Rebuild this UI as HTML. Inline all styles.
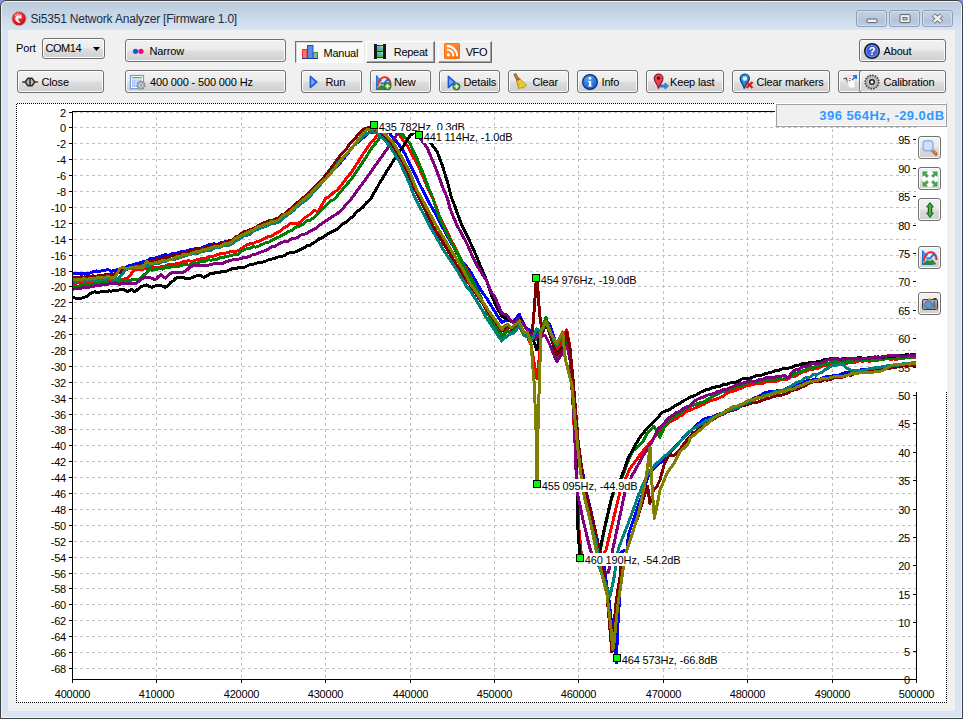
<!DOCTYPE html>
<html><head><meta charset="utf-8"><title>Si5351 Network Analyzer [Firmware 1.0]</title>
<style>
html,body{margin:0;padding:0}
body{width:963px;height:719px;overflow:hidden;position:relative;background:#8c8cec;font-family:"Liberation Sans", "DejaVu Sans", sans-serif;font-size:11px;color:#000}
#win{position:absolute;left:0;top:0;width:963px;height:719px;box-sizing:border-box;border:1px solid #3f3f3f;border-radius:6px 6px 0 0;background:#d7e4f2;box-shadow:inset 0 0 0 1px #edf2f9}
#cap{position:absolute;left:2px;top:2px;width:959px;height:28px;background:linear-gradient(#bbcbdc,#d7e4f2);border-radius:4px 4px 0 0}
#title{position:absolute;left:30.5px;top:12px;font-size:12px;line-height:14px;color:#1e2b3f;white-space:nowrap;letter-spacing:-0.2px}
#client{position:absolute;left:8px;top:30px;width:947px;height:681px;background:#f0f0f0}
.cb{position:absolute;top:10px;width:30px;height:17px;box-sizing:border-box;border:1px solid #8e9fba;border-radius:3px;background:linear-gradient(#c3d2e4,#b7c8dd 50%,#b0c2d9 51%,#bccde1);box-shadow:inset 0 0 0 1px rgba(255,255,255,.35)}
.t{position:absolute;white-space:nowrap;line-height:13px;font-size:11px;letter-spacing:-0.15px}
.btn{position:absolute;box-sizing:border-box;border:1px solid #707070;border-radius:3px;background:linear-gradient(#f2f2f2 0%,#ebebeb 47%,#dddddd 53%,#cfcfcf 100%);box-shadow:inset 0 0 0 1px #fbfbfb}
.sb{position:absolute;box-sizing:border-box}
.sb.up{background:#f0f0f0;border-top:1px solid #fff;border-left:1px solid #fff;border-right:1px solid #696969;border-bottom:1px solid #696969;box-shadow:inset -1px -1px 0 #a0a0a0}
.sb.down{background:#f8f8f8;border-top:1px solid #6f6f6f;border-left:1px solid #6f6f6f;border-right:1px solid #fff;border-bottom:1px solid #fff;box-shadow:inset 1px 1px 0 #d8d8d8}
#rd{position:absolute;left:775px;top:103px;width:172px;height:24px;box-sizing:border-box;background:#f0f0f0;border:1px solid;border-color:#fff #a0a0a0 #a0a0a0 #fff;box-shadow:inset 1px 1px 0 #a0a0a0,inset -1px -1px 0 #fff}
#rd span{position:absolute;right:1.5px;top:4px;font-size:13px;line-height:15px;font-weight:bold;color:#3399ff;white-space:nowrap;letter-spacing:0.45px}
</style></head>
<body>
<div id="win"></div>
<div id="cap"></div>
<svg width="16" height="16" viewBox="0 0 16 16" style="position:absolute;left:11px;top:11px;overflow:visible"><defs><radialGradient id="tg" cx="0.4" cy="0.35" r="0.75"><stop offset="0" stop-color="#f06a6a"/><stop offset="0.55" stop-color="#e01a22"/><stop offset="1" stop-color="#b80c14"/></radialGradient></defs><circle cx="8" cy="7.6" r="7.2" fill="url(#tg)" stroke="#b9b4b8" stroke-width="0.9"/><path d="M4.2 8.5C3.8 5.5 6.2 3.4 8.8 4.4L10.6 3.2L10.2 5.2C11.2 6.4 10.8 7.8 9.4 7.6C8.2 7 6.8 7.6 7.2 9L9.4 11.6L8.2 12.2L5.2 10.2Z" fill="#fbeaea"/><path d="M5.2 5L4.3 3.6M6.6 4.2L6.2 2.7M8 3.9L8.2 2.5" stroke="#fbeaea" stroke-width="0.9"/></svg>
<div id="title">Si5351 Network Analyzer [Firmware 1.0]</div>
<div class="cb" style="left:856px;width:31px"><svg width="29" height="15" style="position:absolute;left:0;top:0"><rect x="10" y="8" width="10" height="3.6" rx="0.8" fill="#f2f2f2" stroke="#5b606c" stroke-width="1"/></svg></div>
<div class="cb" style="left:889px;width:31px"><svg width="29" height="15" style="position:absolute;left:0;top:0"><rect x="10" y="3.6" width="10" height="8" rx="0.8" fill="#f2f2f2" stroke="#5b606c" stroke-width="1"/><rect x="13" y="6.5" width="4" height="2.4" fill="#b7c8dd" stroke="#5b606c" stroke-width="0.9"/></svg></div>
<div class="cb" style="left:922px;width:31px"><svg width="29" height="15" style="position:absolute;left:0;top:0"><path d="M10.5 4L18.5 11M18.5 4L10.5 11" stroke="#5b606c" stroke-width="4.3"/><path d="M10.8 4.2L18.2 10.8M18.2 4.2L10.8 10.8" stroke="#f2f2f2" stroke-width="2.5"/></svg></div>
<div id="client"></div>
<span class="t" style="left:16px;top:42px">Port</span>
<div class="btn" style="left:42px;top:38px;width:63px;height:21px"><span class="t" style="left:2.5px;top:3px;letter-spacing:-0.45px">COM14</span><svg width="7" height="4" viewBox="0 0 7 4" style="position:absolute;left:50px;top:8px"><path d="M0 0H7L3.5 4Z" fill="#000"/></svg></div>
<div class="btn" style="left:17px;top:70px;width:87px;height:23px"><svg width="16" height="16" viewBox="0 0 16 16" style="position:absolute;left:4px;top:3px;overflow:visible"><path d="M0 8H4M12 8H16" stroke="#4a453f" stroke-width="1.6"/><path d="M3.2 8L6 4.2H10L12.8 8L10 11.8H6Z" fill="#bdbab2" stroke="#2d2a25" stroke-width="1.5"/><path d="M8 4.2V11.8" stroke="#2d2a25" stroke-width="1.5"/></svg><span class="t" style="left:23.5px;top:5px">Close</span></div>
<div class="btn" style="left:125px;top:39px;width:161px;height:23px"><svg width="16" height="16" viewBox="0 0 16 16" style="position:absolute;left:4px;top:3px;overflow:visible"><circle cx="5.5" cy="8.3" r="2.6" fill="#0063dc"/><circle cx="11" cy="8.3" r="2.6" fill="#ff0084"/></svg><span class="t" style="left:23.5px;top:5px">Narrow</span></div>
<div class="btn" style="left:125px;top:70px;width:161px;height:23px"><svg width="16" height="16" viewBox="0 0 16 16" style="position:absolute;left:4px;top:4px;overflow:visible"><rect x="0.5" y="0.5" width="13" height="13" fill="#fff" stroke="#6f9fe0" stroke-width="1.2"/><rect x="2" y="2" width="10" height="1.4" fill="#5cb85c"/><rect x="2" y="4.5" width="10" height="7.5" fill="#a9c5ef"/><path d="M3 6H4M5 6H8M9 6H10M3 8H4M5 8H8M3 10H4M5 10H7" stroke="#e8f0fc" stroke-width="1"/><circle cx="11" cy="10.3" r="3.9" fill="#b9b9b9" stroke="#7d7d7d" stroke-width="1.3" stroke-dasharray="1.6 1.1"/><circle cx="11" cy="10.3" r="2.6" fill="#d9d9d9" stroke="#8a8a8a" stroke-width="0.6"/><circle cx="11" cy="10.3" r="1.2" fill="#6fa8f0"/></svg><span class="t" style="left:24px;top:5px">400 000 - 500 000 Hz</span></div>
<div class="sb down" style="left:295px;top:41px;width:68px;height:22px"><svg width="16" height="14" viewBox="0 0 16 14" style="position:absolute;left:6px;top:3px;overflow:visible"><rect x="0.5" y="4.5" width="4.5" height="9" fill="#ff7070" stroke="#f03030"/><rect x="5.5" y="0.5" width="5.5" height="13" fill="#5a8ce8" stroke="#1f50d0"/><rect x="11.5" y="7.5" width="4" height="6" fill="#7fc07f" stroke="#3a8a3a"/><path d="M0 13.5H16" stroke="#203a90" stroke-width="1"/></svg><span class="t" style="left:27.5px;top:5px;letter-spacing:-0.25px">Manual</span></div>
<div class="sb up" style="left:366px;top:41px;width:69px;height:22px"><svg width="12" height="15" viewBox="0 0 12 15" style="position:absolute;left:7px;top:2px;overflow:visible"><rect x="0" y="0" width="12" height="15" fill="#3a3a3a"/><rect x="0" y="0" width="2.8" height="15" fill="#151515"/><rect x="9.2" y="0" width="2.8" height="15" fill="#151515"/><rect x="3" y="0" width="6" height="1" fill="#f0f0f0"/><rect x="3" y="14" width="6" height="1" fill="#f0f0f0"/><rect x="3" y="2" width="6" height="5" fill="#5fb0f5"/><path d="M3 3.5L9 6V7H3Z" fill="#45c540"/><rect x="7.6" y="2" width="1.4" height="1.6" fill="#f5e050"/><rect x="3" y="8" width="6" height="5" fill="#5fb0f5"/><path d="M3 9.5L9 12V13H3Z" fill="#45c540"/><rect x="7.6" y="8" width="1.4" height="1.6" fill="#f5e050"/></svg><span class="t" style="left:26.7px;top:4px;letter-spacing:-0.25px">Repeat</span></div>
<div class="sb up" style="left:438px;top:41px;width:54px;height:22px"><svg width="16" height="16" viewBox="0 0 16 16" style="position:absolute;left:5px;top:1px;overflow:visible"><defs><linearGradient id="rssg" x1="0" y1="0" x2="1" y2="1"><stop offset="0" stop-color="#ff9a45"/><stop offset="1" stop-color="#ff6a10"/></linearGradient></defs><rect x="0" y="0" width="16" height="16" rx="1.5" fill="#ff6f14"/><rect x="1" y="1" width="14" height="14" rx="1" fill="url(#rssg)"/><circle cx="4.3" cy="11.8" r="1.6" fill="#fff"/><path d="M3 6.6A6.5 6.5 0 0 1 9.5 13.2" fill="none" stroke="#fff" stroke-width="1.9"/><path d="M3 3A10.2 10.2 0 0 1 13.2 13.2" fill="none" stroke="#fff" stroke-width="1.9"/></svg><span class="t" style="left:26.7px;top:4px;letter-spacing:-0.4px">VFO</span></div>
<div class="btn" style="left:301px;top:70px;width:61px;height:23px"><svg width="16" height="16" viewBox="0 0 16 16" style="position:absolute;left:4px;top:3px;overflow:visible"><path d="M4.3 2.2V13.6L11 8Z" fill="#4f8af0" stroke="#1a55dc" stroke-width="1.4" stroke-linejoin="round"/><path d="M5.5 5V11L8.6 8Z" fill="#7fadf5"/></svg><span class="t" style="left:23.5px;top:5px">Run</span></div>
<div class="btn" style="left:370px;top:70px;width:61px;height:23px"><svg width="16" height="16" viewBox="0 0 16 16" style="position:absolute;left:5px;top:4px;overflow:visible"><path d="M0.8 0.5V14.2H11" stroke="#1f6fd8" stroke-width="1.6" fill="none"/><path d="M1 0.8L6 5.5L1.5 9Z" fill="#3a8ae8"/><path d="M1.5 13L5 10L8 11L10.5 9.5L14 13.5V14.5H1.5Z" fill="#2f8a2f"/><path d="M1.8 11C3 5 6 1.8 9.5 2.2C12.5 2.8 14.4 6 14.6 10" fill="none" stroke="#f02828" stroke-width="1.9"/><path d="M4.5 8.2L8 8.6L11.5 4.5L14.5 6.5" fill="none" stroke="#1f6fe0" stroke-width="1.9"/><circle cx="11.5" cy="11.2" r="3.6" fill="#3f9a2c" stroke="#1f6a14" stroke-width="0.8"/><path d="M9.3 11.2H13.7M11.5 9.0V13.399999999999999" stroke="#e8f5e0" stroke-width="1.6"/></svg><span class="t" style="left:23px;top:5px">New</span></div>
<div class="btn" style="left:439px;top:70px;width:61px;height:23px"><svg width="16" height="16" viewBox="0 0 16 16" style="position:absolute;left:4px;top:3px;overflow:visible"><path d="M4.3 2.2V13.6L11 8Z" fill="#4f8af0" stroke="#1a55dc" stroke-width="1.4" stroke-linejoin="round"/><path d="M5.5 5V11L8.6 8Z" fill="#7fadf5"/><circle cx="12.5" cy="12.5" r="3.6" fill="#3f9a2c" stroke="#1f6a14" stroke-width="0.8"/><path d="M10.3 12.5H14.7M12.5 10.3V14.7" stroke="#e8f5e0" stroke-width="1.6"/></svg><span class="t" style="left:23.5px;top:5px">Details</span></div>
<div class="btn" style="left:508px;top:70px;width:61px;height:23px"><svg width="16" height="16" viewBox="0 0 16 16" style="position:absolute;left:4px;top:3.299999999999997px;overflow:visible"><path d="M2.2 0.8L5.2 6.2" stroke="#6a4a1a" stroke-width="3" stroke-linecap="round"/><path d="M2.2 0.8L5.2 6.2" stroke="#c08a30" stroke-width="1.6" stroke-linecap="round"/><path d="M3.4 6.6L7.2 4.8" stroke="#e03a2a" stroke-width="1.8"/><path d="M3.6 7L7.4 5.2L13.6 11.2L11.5 12.5L10.5 14L7.5 13.8L5.6 14.6Z" fill="#f2d230" stroke="#a8861a" stroke-width="0.9" stroke-linejoin="round"/><path d="M5.5 8L7 13.5M7 7.2L10.5 13" stroke="#c9a61e" stroke-width="0.7"/></svg><span class="t" style="left:23.5px;top:5px">Clear</span></div>
<div class="btn" style="left:577px;top:70px;width:61px;height:23px"><svg width="16" height="16" viewBox="0 0 16 16" style="position:absolute;left:4px;top:3px;overflow:visible"><defs><radialGradient id="infg" cx="0.4" cy="0.3" r="0.8"><stop offset="0" stop-color="#5fa6f0"/><stop offset="1" stop-color="#0a4fc0"/></radialGradient></defs><circle cx="8" cy="8" r="7.4" fill="url(#infg)" stroke="#0a2f86" stroke-width="1.2"/><circle cx="8" cy="4.2" r="1.3" fill="#fff"/><path d="M6.2 7H9.2V11.5H10.2V12.6H6V11.5H7V8.1H6.2Z" fill="#fff"/></svg><span class="t" style="left:23.5px;top:5px">Info</span></div>
<div class="btn" style="left:646px;top:70px;width:78px;height:23px"><svg width="16" height="16" viewBox="0 0 16 16" style="position:absolute;left:6px;top:2px;overflow:visible"><path d="M5.5 15.8C5.3 11.5 1.2 9.5 1.2 5.4A4.4 4.4 0 0 1 10 5.4C10 9.5 6 11.5 5.5 15.8Z" fill="#e8444e" stroke="#8a1018" stroke-width="1.1"/><circle cx="5.6" cy="5.2" r="1.6" fill="#4a1010"/><path d="M7 12H12V10L15.5 13L12 16V14H7Z" fill="#3a8cf0" stroke="#1556b8" stroke-width="0.7"/></svg><span class="t" style="left:23px;top:5px">Keep last</span></div>
<div class="btn" style="left:732px;top:70px;width:98px;height:23px"><svg width="16" height="16" viewBox="0 0 16 16" style="position:absolute;left:6px;top:2px;overflow:visible"><path d="M5 15.6C5 12 1.2 9.5 1.2 5.6A4.6 4.6 0 0 1 10.4 5.6C10.4 8.5 8 10.5 6.6 12.6Z" fill="#1a8ee0" stroke="#0a3a70" stroke-width="1.2"/><circle cx="5.8" cy="5.6" r="2.3" fill="#dceeff"/><path d="M7.5 9L13.5 15M13.5 9L7.5 15" stroke="#e01818" stroke-width="2.3"/></svg><span class="t" style="left:23.5px;top:5px">Clear markers</span></div>
<div class="btn" style="left:838px;top:70px;width:30px;height:23px"><svg width="16" height="16" viewBox="0 0 16 16" style="position:absolute;left:4px;top:3px;overflow:visible"><path d="M0.5 5L3 4L5 9" stroke="#555" stroke-width="1.3" fill="none"/><path d="M5 2H12V14H6L4.5 10Z" fill="#fbfbfb" stroke="#cfcfcf" stroke-width="0.8"/><path d="M6 4.5H8M6 6.5H7.5" stroke="#e05050" stroke-width="1"/><path d="M9 6L13 2M10 1.8H13.2V5" stroke="#2a7ae8" stroke-width="1.7" fill="none"/></svg></div>
<div class="btn" style="left:859px;top:70px;width:87px;height:23px"><svg width="16" height="16" viewBox="0 0 16 16" style="position:absolute;left:4px;top:3px;overflow:visible"><circle cx="8" cy="8" r="6.7" fill="#b2b2b2" stroke="#3a3a3a" stroke-width="1.7" stroke-dasharray="1.5 1.13"/><circle cx="8" cy="8" r="5.6" fill="#b6b6b6"/><circle cx="8" cy="8" r="4.4" fill="#c6c6c6"/><circle cx="8" cy="8" r="2.3" fill="#fdfdfd" stroke="#222" stroke-width="1.5"/></svg><span class="t" style="left:23.5px;top:5px">Calibration</span></div>
<div class="btn" style="left:859px;top:39px;width:87px;height:23px"><svg width="16" height="16" viewBox="0 0 16 16" style="position:absolute;left:4px;top:3px;overflow:visible"><circle cx="8" cy="8" r="7.3" fill="#3f62d8" stroke="#15181f" stroke-width="1.4"/><circle cx="8" cy="8" r="5.9" fill="none" stroke="#7d9bf0" stroke-width="0.8"/><text x="8" y="12" text-anchor="middle" font-family='"Liberation Sans",sans-serif' font-weight="bold" font-size="11px" fill="#fff">?</text></svg><span class="t" style="left:23.5px;top:5px">About</span></div>
<svg id="chart" width="963" height="719" viewBox="0 0 963 719" style="position:absolute;left:0;top:0" font-family='"Liberation Sans", "DejaVu Sans", sans-serif' font-size="11px">
<defs><pattern id="dots" width="2" height="2" patternUnits="userSpaceOnUse"><rect x="0" y="0" width="1" height="1" fill="#000"/><rect x="1" y="1" width="1" height="1" fill="#000"/></pattern><clipPath id="plotclip"><rect x="72" y="111" width="845" height="569"/></clipPath></defs>
<rect x="16" y="103" width="931" height="600" fill="#fff"/>
<g fill="url(#dots)"><rect x="16" y="103" width="931" height="1"/><rect x="16" y="702" width="931" height="1"/><rect x="16" y="103" width="1" height="600"/><rect x="946" y="103" width="1" height="600"/></g>
<g stroke="#c0c0c0" stroke-width="1" stroke-dasharray="3 3" shape-rendering="crispEdges">
<line x1="74" y1="112.5" x2="916" y2="112.5"/>
<line x1="74" y1="127.5" x2="916" y2="127.5"/>
<line x1="74" y1="143.5" x2="916" y2="143.5"/>
<line x1="74" y1="159.5" x2="916" y2="159.5"/>
<line x1="74" y1="175.5" x2="916" y2="175.5"/>
<line x1="74" y1="191.5" x2="916" y2="191.5"/>
<line x1="74" y1="207.5" x2="916" y2="207.5"/>
<line x1="74" y1="223.5" x2="916" y2="223.5"/>
<line x1="74" y1="239.5" x2="916" y2="239.5"/>
<line x1="74" y1="255.5" x2="916" y2="255.5"/>
<line x1="74" y1="271.5" x2="916" y2="271.5"/>
<line x1="74" y1="286.5" x2="916" y2="286.5"/>
<line x1="74" y1="302.5" x2="916" y2="302.5"/>
<line x1="74" y1="318.5" x2="916" y2="318.5"/>
<line x1="74" y1="334.5" x2="916" y2="334.5"/>
<line x1="74" y1="350.5" x2="916" y2="350.5"/>
<line x1="74" y1="366.5" x2="916" y2="366.5"/>
<line x1="74" y1="382.5" x2="916" y2="382.5"/>
<line x1="74" y1="398.5" x2="916" y2="398.5"/>
<line x1="74" y1="414.5" x2="916" y2="414.5"/>
<line x1="74" y1="429.5" x2="916" y2="429.5"/>
<line x1="74" y1="445.5" x2="916" y2="445.5"/>
<line x1="74" y1="461.5" x2="916" y2="461.5"/>
<line x1="74" y1="477.5" x2="916" y2="477.5"/>
<line x1="74" y1="493.5" x2="916" y2="493.5"/>
<line x1="74" y1="509.5" x2="916" y2="509.5"/>
<line x1="74" y1="525.5" x2="916" y2="525.5"/>
<line x1="74" y1="541.5" x2="916" y2="541.5"/>
<line x1="74" y1="557.5" x2="916" y2="557.5"/>
<line x1="74" y1="573.5" x2="916" y2="573.5"/>
<line x1="74" y1="588.5" x2="916" y2="588.5"/>
<line x1="74" y1="604.5" x2="916" y2="604.5"/>
<line x1="74" y1="620.5" x2="916" y2="620.5"/>
<line x1="74" y1="636.5" x2="916" y2="636.5"/>
<line x1="74" y1="652.5" x2="916" y2="652.5"/>
<line x1="74" y1="668.5" x2="916" y2="668.5"/>
<line x1="156.5" y1="111" x2="156.5" y2="679"/>
<line x1="241.5" y1="111" x2="241.5" y2="679"/>
<line x1="325.5" y1="111" x2="325.5" y2="679"/>
<line x1="410.5" y1="111" x2="410.5" y2="679"/>
<line x1="494.5" y1="111" x2="494.5" y2="679"/>
<line x1="578.5" y1="111" x2="578.5" y2="679"/>
<line x1="663.5" y1="111" x2="663.5" y2="679"/>
<line x1="747.5" y1="111" x2="747.5" y2="679"/>
<line x1="832.5" y1="111" x2="832.5" y2="679"/>
</g>
<g fill="#000" letter-spacing="-0.2" text-anchor="end">
<text x="910" y="683.5">0</text>
<text x="910" y="655.5">5</text>
<text x="910" y="626.5">10</text>
<text x="910" y="598.5">15</text>
<text x="910" y="569.5">20</text>
<text x="910" y="541.5">25</text>
<text x="910" y="513.5">30</text>
<text x="910" y="484.5">35</text>
<text x="910" y="456.5">40</text>
<text x="910" y="427.5">45</text>
<text x="910" y="399.5">50</text>
<text x="910" y="371.5">55</text>
<text x="910" y="342.5">60</text>
<text x="910" y="314.5">65</text>
<text x="910" y="285.5">70</text>
<text x="910" y="257.5">75</text>
<text x="910" y="229.5">80</text>
<text x="910" y="200.5">85</text>
<text x="910" y="172.5">90</text>
<text x="910" y="143.5">95</text>
</g>
<g fill="none" stroke-width="3" stroke-linejoin="round" stroke-linecap="butt" shape-rendering="crispEdges" clip-path="url(#plotclip)">
<polyline stroke="#0000ff" points="72.0,274.0 75.0,273.4 78.0,273.7 81.0,273.3 84.0,273.5 87.0,273.4 90.0,273.0 93.2,271.7 96.4,271.0 99.6,271.7 102.8,270.2 106.0,270.0 108.7,269.8 111.3,271.3 114.0,270.7 117.0,269.7 120.0,269.3 123.0,267.8 126.0,267.1 129.0,265.4 132.0,265.2 135.0,264.0 138.1,263.6 141.1,262.2 144.2,261.6 147.2,260.5 150.3,258.6 153.3,258.8 156.4,257.4 159.3,256.9 162.3,255.7 165.2,254.6 168.2,255.3 171.2,254.0 174.1,253.7 177.1,253.3 180.0,252.0 183.1,251.7 186.2,251.3 189.4,249.8 192.5,249.7 195.6,248.5 198.8,248.6 201.9,247.8 205.0,246.5 208.1,245.1 211.1,244.5 214.2,243.9 217.2,244.4 220.3,242.8 223.4,242.4 226.4,241.2 229.5,240.8 232.4,239.9 235.2,238.7 238.1,237.7 241.0,237.0 244.0,235.5 247.0,233.8 250.0,232.6 253.0,230.6 256.0,229.4 259.0,227.0 262.2,226.4 265.5,225.5 268.7,223.8 271.9,221.8 275.2,221.7 278.4,220.0 281.5,218.5 284.6,216.2 287.8,213.5 290.9,211.5 294.0,209.0 296.7,206.1 299.4,204.7 302.2,201.9 304.9,199.1 307.6,197.0 310.6,193.1 313.6,191.2 316.6,188.3 319.7,183.7 322.7,181.6 325.7,178.0 328.6,174.9 331.4,171.4 334.3,168.7 337.1,166.4 340.0,163.0 343.1,159.3 346.2,155.0 349.4,151.4 352.5,147.5 355.8,143.8 359.0,141.8 362.3,138.2 365.5,136.1 368.8,132.5 371.5,132.4 374.3,130.8 377.0,130.0 380.3,131.1 383.7,130.4 387.0,131.0 390.1,133.8 393.2,138.0 396.3,141.3 399.2,145.2 402.1,149.5 405.0,153.8 407.5,159.2 410.1,164.7 412.6,170.0 416.3,177.3 420.0,185.0 423.2,191.1 426.4,197.6 429.9,204.0 433.4,210.0 436.7,216.2 440.0,222.7 443.4,228.9 446.7,235.0 450.0,240.8 453.4,246.7 456.7,252.6 460.0,258.4 463.3,262.7 466.7,266.8 470.0,271.0 473.3,276.9 476.7,282.7 480.0,288.5 483.4,293.7 486.7,298.4 490.1,303.9 493.5,309.4 496.2,313.8 499.0,318.3 501.7,322.6 505.0,320.9 508.4,320.0 510.7,320.7 513.0,322.0 516.1,318.3 519.2,314.2 522.1,320.5 525.0,326.8 528.4,329.3 532.0,333.0 536.0,335.0 538.5,332.6 541.0,330.0 543.5,324.8 546.0,320.0 550.0,325.0 552.8,333.9 555.7,342.9 558.5,351.8 560.8,348.2 563.0,345.0 566.0,335.0 570.0,350.0 573.0,385.0 576.0,420.0 579.0,450.0 582.5,472.0 586.7,493.4 589.9,506.8 593.0,520.0 596.1,534.3 599.2,548.5 601.6,557.0 604.0,566.0 606.5,583.1 609.0,600.0 613.0,635.0 616.3,663.0 617.7,627.5 619.6,598.0 620.6,566.0 621.0,552.0 624.0,550.9 627.0,550.0 628.4,535.0 631.7,525.1 635.0,515.0 638.5,504.9 642.0,495.0 645.2,485.1 648.5,475.0 651.0,471.8 653.5,468.4 655.0,467.5 658.1,464.2 661.3,461.8 664.4,460.0 667.0,456.8 669.7,453.7 672.4,450.1 675.0,447.0 678.3,443.2 681.7,439.6 685.0,435.7 687.5,433.6 690.0,432.0 693.5,428.3 697.0,425.0 700.6,421.6 704.3,418.8 707.5,417.8 710.8,417.4 714.0,416.4 717.2,414.7 720.4,413.4 723.6,412.7 726.8,410.1 730.0,409.5 732.9,408.4 735.8,407.4 738.6,405.4 741.5,404.1 744.4,403.7 747.3,402.0 750.5,400.0 753.7,398.3 756.8,397.1 760.0,396.0 763.2,393.4 766.4,392.5 769.6,391.6 772.8,391.1 776.0,391.3 779.1,390.1 782.3,390.2 785.5,389.0 788.5,387.4 791.5,386.6 794.5,386.1 797.5,385.4 800.4,383.7 803.4,382.3 806.4,381.0 809.4,380.6 812.4,380.0 815.4,378.9 818.4,379.3 821.3,378.7 824.3,377.1 827.3,376.6 830.3,376.9 833.3,375.8 836.3,375.4 839.3,375.0 842.3,373.6 845.2,372.6 848.2,372.2 851.2,372.4 854.2,370.9 857.2,370.6 860.2,370.0 863.2,369.7 866.1,369.3 869.1,368.9 872.1,369.3 875.0,367.7 878.0,367.1 881.0,367.5 884.2,367.8 887.3,367.3 890.5,367.0 893.7,365.7 896.8,366.1 900.0,365.0 903.2,365.2 906.4,363.6 909.6,364.0 912.8,363.7 916.0,362.7"/>
<polyline stroke="#ff0000" points="72.0,284.0 75.0,283.4 78.0,282.9 81.0,283.2 84.0,282.6 87.0,282.2 90.0,282.7 93.0,282.3 96.0,282.9 99.0,282.5 102.0,282.3 105.0,281.2 108.0,281.5 111.0,280.9 114.0,281.0 116.7,280.1 119.3,279.7 122.0,280.0 125.0,278.5 128.0,278.0 131.0,274.1 134.0,269.8 137.2,270.0 140.4,269.6 143.6,269.2 146.8,267.9 150.0,267.7 153.2,267.9 156.4,267.3 159.3,267.1 162.3,266.8 165.2,266.3 168.2,264.5 171.2,264.8 174.1,264.3 177.1,263.5 180.0,263.0 182.9,261.9 185.7,261.8 188.6,260.6 191.4,261.4 194.3,260.7 197.1,259.6 200.0,259.0 202.9,258.0 205.7,258.2 208.6,256.9 211.4,256.7 214.3,255.9 217.1,254.6 220.0,253.9 222.9,253.3 225.8,253.1 228.8,252.3 231.7,251.4 234.6,251.2 237.5,251.0 240.4,249.5 243.4,247.0 246.5,245.1 249.6,244.0 252.8,243.7 255.9,242.0 259.0,241.2 262.2,239.8 265.5,238.2 268.7,236.5 271.9,236.1 275.2,233.4 278.4,232.4 281.3,230.1 284.2,227.6 287.1,226.1 290.0,223.7 292.6,223.3 295.3,223.5 297.9,223.7 301.0,221.6 304.1,218.3 307.2,216.2 310.3,214.2 313.4,211.0 315.7,210.9 318.0,212.0 320.6,207.3 323.1,202.8 325.7,198.4 328.5,196.9 331.2,194.7 334.0,192.1 336.8,190.6 341.0,185.6 343.8,181.9 346.6,178.2 349.4,174.8 352.2,171.2 355.0,166.5 357.8,162.4 360.6,158.0 363.4,153.4 366.0,149.9 368.6,146.0 371.2,142.2 373.8,140.4 376.4,136.3 379.0,134.5 381.5,132.5 384.0,131.2 387.0,131.7 390.0,131.2 393.0,130.5 396.5,133.0 400.0,135.7 402.5,139.4 405.1,142.8 407.6,146.3 411.3,153.3 415.0,160.0 417.5,164.9 420.0,170.0 422.5,175.7 425.1,181.7 427.6,187.6 430.1,192.4 432.6,197.6 435.8,206.2 439.0,215.0 442.0,221.5 445.0,227.4 448.0,233.5 451.0,240.0 454.2,246.0 457.5,252.3 460.8,258.9 464.0,265.0 466.8,269.9 469.7,274.9 472.5,280.0 476.2,287.3 480.0,295.0 483.4,303.2 486.7,311.0 489.7,316.0 492.7,320.9 495.7,325.8 498.7,330.8 501.7,336.0 504.6,332.5 507.6,330.0 511.7,333.0 514.2,330.9 516.7,327.8 519.2,326.0 523.4,335.0 527.6,337.0 531.0,345.0 534.5,365.0 536.8,378.5 539.0,360.0 540.5,340.0 543.2,330.8 546.0,322.0 550.0,332.0 553.4,342.0 556.8,352.0 559.4,345.9 562.0,340.0 564.4,335.2 566.8,330.0 570.0,348.0 572.0,385.0 574.0,425.0 576.0,460.0 577.5,490.0 579.0,530.0 582.0,561.0 585.0,560.2 588.0,560.7 591.0,560.9 594.0,560.2 597.0,560.9 600.0,560.0 603.0,555.0 606.0,550.0 609.0,537.4 612.0,525.0 614.7,513.9 617.3,502.6 620.0,491.8 623.3,484.0 626.7,476.1 630.0,468.4 633.3,464.1 636.7,459.6 640.0,455.0 642.8,451.6 645.6,447.9 648.5,444.6 651.3,441.3 654.1,437.6 657.0,434.2 659.8,430.9 662.6,428.0 665.4,426.5 668.2,423.3 671.0,421.1 673.8,419.7 676.8,418.5 679.8,416.0 682.8,414.8 685.8,412.0 688.8,410.3 691.6,409.8 694.4,408.2 697.2,407.2 700.0,405.6 702.8,404.8 705.6,403.2 708.4,401.4 711.2,400.4 714.0,399.7 717.2,398.8 720.4,397.3 723.6,395.8 726.8,393.3 730.0,392.0 732.9,391.2 735.8,390.3 738.6,388.9 741.5,388.1 744.4,386.5 747.3,385.4 750.4,385.1 753.5,384.6 756.6,383.3 759.8,383.8 762.9,383.3 766.0,382.0 769.2,380.9 772.5,381.9 775.8,381.4 779.0,380.5 782.2,379.1 785.5,379.4 788.5,378.9 791.5,376.4 794.5,376.6 797.5,374.9 800.4,372.8 803.4,371.7 806.4,371.3 809.4,369.9 812.4,369.3 815.4,368.8 818.4,368.3 821.3,366.4 824.3,365.4 827.3,366.1 830.3,363.9 833.3,363.9 836.3,364.2 839.2,362.7 842.2,363.5 845.1,363.2 848.1,363.0 851.1,362.2 854.0,362.4 857.0,361.5 860.0,360.8 863.0,361.3 866.0,360.6 869.0,361.3 872.0,360.9 875.0,360.2 878.0,360.1 881.0,359.8 884.2,358.8 887.3,358.6 890.5,359.3 893.7,358.9 896.8,359.3 900.0,358.5 903.2,358.4 906.4,357.4 909.6,357.5 912.8,357.9 916.0,357.2"/>
<polyline stroke="#008000" points="72.0,286.4 75.0,286.3 78.0,286.2 81.0,285.9 84.0,285.8 87.0,285.2 90.0,284.5 93.0,284.9 96.0,283.2 99.0,283.6 102.0,284.1 105.0,283.4 108.0,283.5 111.0,282.0 114.0,282.3 117.2,281.9 120.4,281.2 123.6,281.3 126.8,281.0 130.0,280.5 133.3,279.2 136.7,279.0 140.0,279.0 143.0,275.6 146.0,273.5 149.0,269.8 152.7,270.1 156.4,269.5 159.3,268.5 162.3,269.1 165.2,267.6 168.2,267.9 171.2,266.7 174.1,266.1 177.1,267.0 180.0,266.0 182.9,265.0 185.7,264.4 188.6,265.1 191.4,264.3 194.3,262.8 197.1,263.3 200.0,262.0 202.9,261.4 205.7,261.1 208.6,259.7 211.4,260.2 214.3,259.2 217.1,259.1 220.0,257.7 222.9,257.8 225.8,256.4 228.8,256.0 231.7,255.2 234.6,254.7 237.5,254.8 240.4,251.7 243.4,250.0 246.5,248.9 249.6,248.6 252.8,246.8 255.9,247.1 259.0,246.0 262.2,244.3 265.5,242.8 268.7,242.2 271.9,240.2 275.2,238.5 278.4,237.3 281.6,235.5 284.9,234.1 288.1,231.2 291.4,230.9 294.6,227.6 297.9,226.6 301.0,225.3 304.1,223.7 307.2,220.6 310.3,220.1 313.4,217.9 316.5,214.8 319.5,212.2 322.6,208.3 325.7,206.2 328.5,203.0 331.2,200.8 334.0,199.6 336.8,196.4 341.1,191.2 343.9,187.7 346.6,184.6 349.4,181.4 352.2,177.8 355.0,173.9 357.8,169.4 360.6,165.3 363.4,161.2 366.0,157.1 368.6,153.1 371.2,148.9 373.8,145.4 376.4,142.4 379.0,138.9 383.0,134.8 386.5,133.4 390.0,131.0 393.5,131.6 397.0,131.0 399.8,132.0 402.6,134.4 406.3,139.3 410.0,143.8 412.5,149.0 415.1,154.5 417.6,160.0 420.7,167.6 423.8,175.0 426.9,183.4 430.0,191.3 432.6,197.6 435.5,206.2 438.4,215.0 441.3,221.5 444.2,227.5 447.1,233.7 450.0,240.0 453.4,246.2 456.7,252.3 460.0,258.5 463.4,265.0 466.2,269.8 469.0,275.1 471.8,280.0 474.5,285.2 477.3,289.8 480.0,295.0 483.4,303.3 486.7,312.0 489.7,317.2 492.7,322.0 495.7,327.0 498.7,331.9 501.7,337.0 504.6,334.2 507.6,331.0 511.7,333.0 514.2,330.9 516.7,327.6 519.2,325.0 523.4,334.0 527.6,335.0 531.0,338.0 533.5,338.9 536.0,340.0 538.5,334.8 541.0,330.0 543.5,324.0 546.0,317.6 550.0,330.0 553.4,344.8 556.8,360.0 559.9,352.5 563.0,345.0 566.0,335.0 570.0,355.0 572.0,387.0 574.0,420.0 576.0,450.0 577.0,490.0 578.0,530.0 580.0,558.0 582.8,558.5 585.7,557.4 588.5,558.4 591.3,558.7 594.2,558.2 597.0,558.0 600.3,550.0 604.3,530.0 607.8,515.1 611.3,500.0 614.0,492.0 616.8,486.8 619.5,482.0 622.3,477.0 626.0,466.8 629.6,457.0 633.0,450.7 636.0,448.7 639.0,445.2 642.0,443.0 645.0,437.5 648.0,432.0 651.0,429.8 654.0,426.0 656.9,431.9 659.8,437.5 664.0,428.0 667.0,423.6 670.0,418.8 673.1,416.8 676.3,415.0 679.4,413.5 682.5,411.2 685.7,409.0 688.8,407.5 691.6,406.2 694.4,404.6 697.2,403.8 700.0,402.8 702.8,402.2 705.6,400.8 708.4,398.9 711.2,397.4 714.0,396.0 717.2,394.3 720.4,392.5 723.6,391.4 726.8,390.9 730.0,389.0 732.9,388.6 735.8,386.8 738.6,386.5 741.5,385.4 744.4,384.3 747.3,383.0 750.4,382.8 753.5,382.6 756.6,381.5 759.8,381.7 762.9,380.6 766.0,380.5 769.2,380.1 772.5,380.2 775.8,379.7 779.0,378.6 782.2,379.3 785.5,378.2 788.5,377.2 791.5,375.8 794.5,373.6 797.5,373.2 800.4,371.4 803.4,370.8 806.4,369.2 809.4,368.0 812.4,367.7 815.4,366.6 818.4,366.0 821.3,364.5 824.3,364.2 827.3,363.5 830.3,362.8 833.3,361.5 836.3,361.1 839.2,361.8 842.2,361.7 845.1,361.3 848.1,361.6 851.1,361.5 854.0,360.7 857.0,360.5 860.0,360.4 863.0,359.6 866.0,360.5 869.0,360.4 872.0,359.5 875.0,359.7 878.0,359.5 881.0,359.0 884.2,359.2 887.3,358.1 890.5,358.8 893.7,358.3 896.8,358.3 900.0,357.8 903.2,357.5 906.4,357.6 909.6,357.6 912.8,357.1 916.0,356.7"/>
<polyline stroke="#000000" points="72.0,297.5 75.3,298.1 78.7,298.3 82.0,298.0 84.5,297.2 87.0,296.4 89.5,294.2 92.0,292.8 94.8,291.8 97.5,292.6 100.2,292.0 103.0,291.8 105.8,291.9 108.7,290.9 111.5,291.2 114.3,290.1 117.2,290.6 120.0,289.8 123.0,289.0 127.0,291.4 129.2,290.8 131.5,289.4 135.0,291.8 138.2,289.0 141.4,286.4 143.9,285.8 146.4,285.0 149.2,286.4 152.0,287.3 156.0,285.6 158.5,285.1 161.0,285.6 163.2,286.5 165.5,287.3 168.1,285.5 170.8,282.3 173.4,280.8 176.0,278.0 179.5,277.9 183.0,277.3 186.0,278.5 189.5,278.5 193.0,277.3 195.5,276.2 198.0,275.6 200.8,275.8 203.7,277.3 207.3,275.6 211.0,273.0 213.8,273.3 216.7,272.4 219.5,272.3 222.8,271.3 226.0,271.5 229.5,269.8 232.4,268.7 235.2,268.9 238.1,267.7 241.0,267.5 244.0,267.4 247.0,266.0 250.0,264.6 253.0,264.5 256.0,263.2 259.0,262.6 262.2,262.3 265.5,261.3 268.7,259.7 271.9,259.0 275.2,258.1 278.4,256.8 281.6,256.3 284.9,255.6 288.1,253.1 291.4,252.7 294.6,252.1 297.9,251.0 301.0,249.1 304.1,247.9 307.2,245.5 310.3,245.2 313.4,243.0 316.5,241.1 319.5,238.6 322.6,237.6 325.7,235.4 328.5,233.6 331.2,232.0 334.0,230.9 336.8,229.5 340.1,226.2 343.4,223.7 346.7,222.1 350.0,218.8 353.3,216.0 356.7,211.8 360.0,209.5 363.3,206.8 366.7,202.4 370.0,200.0 373.3,194.0 376.7,188.4 380.0,182.3 383.0,177.5 386.0,172.5 389.0,167.8 391.6,163.7 394.1,159.6 396.7,155.6 399.5,151.5 402.3,147.8 404.9,144.0 407.4,139.5 410.0,135.6 414.0,132.8 416.5,132.3 419.0,135.0 422.0,136.1 425.0,137.5 428.2,141.0 431.4,143.8 434.5,148.2 437.6,152.6 440.1,159.7 442.6,166.3 445.1,174.3 447.6,182.6 451.4,197.6 455.0,206.7 458.4,216.1 461.8,225.0 464.5,230.8 467.3,236.3 470.0,241.8 473.4,249.5 476.8,256.8 480.0,265.0 483.0,272.0 486.0,279.0 488.9,287.7 491.7,296.0 494.2,301.6 496.8,307.0 499.2,311.5 501.7,316.0 505.0,317.6 507.7,319.0 510.3,320.9 513.0,322.0 516.0,319.9 519.0,318.0 521.7,321.5 524.3,325.5 527.0,329.0 529.5,332.4 532.0,336.0 534.4,343.0 536.8,350.0 540.0,335.0 543.0,328.6 546.0,322.0 550.0,335.0 553.5,344.8 557.0,355.0 560.0,350.3 563.0,346.0 567.0,336.0 570.0,350.0 572.0,385.0 574.0,420.0 576.0,450.0 577.0,490.0 578.0,530.0 580.0,558.0 582.8,557.4 585.7,558.1 588.5,557.8 591.3,557.6 594.2,557.9 597.0,558.0 600.0,550.0 604.0,530.0 607.5,515.2 611.0,500.0 613.4,492.0 616.1,486.9 618.8,482.0 621.5,477.0 625.0,467.2 628.6,457.0 631.5,452.1 634.3,446.9 637.1,442.0 640.0,437.0 642.8,433.8 645.6,430.1 648.5,427.4 651.3,424.4 654.1,421.0 657.0,418.8 659.8,415.0 662.6,412.2 665.4,411.1 668.2,410.2 671.0,408.7 673.8,406.6 676.8,404.7 679.8,403.3 682.8,401.2 685.8,399.6 688.8,398.0 691.6,396.6 694.4,395.7 697.2,394.6 700.0,392.5 702.8,391.2 705.6,389.8 708.4,389.6 711.2,388.0 714.0,387.8 717.2,386.1 720.4,386.3 723.6,384.3 726.8,384.3 730.0,383.0 732.9,382.0 735.8,382.1 738.6,381.2 741.5,379.1 744.4,378.5 747.3,378.2 750.4,378.1 753.5,376.8 756.6,375.7 759.8,375.5 762.9,374.8 766.0,373.5 769.2,372.7 772.5,371.9 775.8,370.5 779.0,370.1 782.2,368.9 785.5,368.7 788.5,368.2 791.5,367.4 794.5,365.9 797.5,365.9 800.4,364.3 803.4,363.6 806.4,363.7 809.4,362.7 812.4,362.1 815.4,362.3 818.4,361.4 821.3,361.0 824.3,359.5 827.3,360.2 830.3,358.4 833.3,358.6 836.3,358.7 839.2,359.1 842.2,359.0 845.1,358.9 848.1,358.1 851.1,358.5 854.0,358.5 857.0,358.0 860.0,357.3 863.0,358.5 866.0,358.4 869.0,357.5 872.0,357.9 875.0,357.3 878.0,356.9 881.0,357.2 884.2,357.3 887.3,355.9 890.5,356.8 893.7,356.8 896.8,355.4 900.0,355.5 903.2,356.0 906.4,354.4 909.6,355.4 912.8,354.2 916.0,354.3"/>
<polyline stroke="#800080" points="72.0,289.4 75.0,288.7 78.0,288.0 81.0,288.4 84.0,287.1 87.0,287.5 90.0,287.0 93.0,286.4 96.0,285.5 99.0,285.9 102.0,284.8 105.0,285.0 108.0,284.1 111.0,283.7 114.0,284.0 116.8,283.8 119.6,284.3 122.4,283.0 125.2,283.1 128.0,283.4 130.8,283.5 133.7,283.8 136.5,283.0 140.2,280.3 144.0,277.3 147.0,277.2 150.0,277.5 153.2,279.0 156.4,279.0 158.7,276.2 161.0,274.8 163.2,277.0 165.5,278.0 168.2,275.2 171.0,273.0 174.0,272.3 177.0,272.0 180.0,272.2 183.0,272.3 186.3,270.6 189.7,267.4 193.0,265.7 196.3,265.8 199.7,265.9 203.0,265.7 205.8,265.2 208.5,265.2 211.2,264.2 214.0,263.9 216.8,263.8 219.5,264.0 222.8,263.2 226.2,261.7 229.5,260.7 232.4,259.9 235.2,259.8 238.1,259.1 241.0,258.7 244.0,257.4 247.0,257.2 250.0,256.1 253.0,254.4 256.0,254.0 259.0,252.9 262.2,251.5 265.5,250.5 268.7,248.8 271.9,246.6 275.2,246.3 278.4,244.0 281.6,242.3 284.9,241.6 288.1,241.1 291.4,239.0 294.6,238.4 297.9,237.3 301.0,235.0 304.1,234.4 307.2,233.0 310.3,231.2 313.4,229.5 316.5,227.9 319.5,224.9 322.6,223.3 325.7,220.8 328.5,219.3 331.2,217.5 334.0,215.6 336.8,214.0 340.1,211.2 343.4,208.0 346.7,203.8 350.0,200.5 353.4,196.0 356.7,191.2 360.0,186.9 363.4,182.3 366.2,178.5 368.9,174.7 371.7,170.8 374.5,166.7 377.3,162.7 380.1,158.8 382.8,155.1 385.6,151.1 389.0,146.4 392.3,142.2 396.7,134.8 400.0,132.2 403.0,131.0 405.7,130.1 408.3,128.8 411.0,128.5 414.0,129.1 417.0,131.0 421.4,140.0 424.5,144.2 427.6,148.8 431.3,157.7 435.0,166.3 437.5,173.0 440.1,180.0 442.6,187.0 445.1,192.9 447.6,199.0 450.0,208.4 453.4,216.9 456.8,225.0 460.1,230.9 463.5,237.2 466.8,243.4 469.5,249.6 472.3,255.9 475.0,261.8 476.7,265.0 480.1,270.5 483.4,275.8 486.8,281.0 489.2,287.1 491.7,293.4 495.0,297.0 498.4,305.2 501.7,313.4 504.2,314.0 506.7,315.0 510.0,319.4 513.4,322.6 515.9,321.2 518.4,318.4 521.2,321.9 524.0,325.5 526.8,329.3 529.3,331.7 531.8,335.0 536.0,338.0 538.5,336.1 541.0,335.0 545.0,335.0 547.5,340.0 550.0,345.0 553.4,353.4 556.8,361.8 560.1,356.7 563.5,351.8 567.0,345.0 570.0,360.0 572.0,390.0 574.0,420.0 575.5,455.0 576.7,490.0 579.9,504.8 583.0,520.0 586.5,534.2 590.0,548.5 594.0,560.0 596.7,563.3 599.3,566.7 602.0,570.0 605.0,572.2 608.0,573.0 610.0,566.0 612.6,550.0 615.3,537.6 618.0,525.0 621.5,508.4 625.0,491.8 628.4,484.0 631.8,476.0 634.5,471.3 637.3,466.3 640.0,461.7 643.8,454.4 647.5,448.9 651.3,443.0 655.0,435.6 658.8,428.0 661.6,425.8 664.4,423.0 667.2,419.6 670.0,417.0 672.8,415.2 675.6,413.0 678.5,412.2 681.3,410.3 684.2,408.1 687.1,406.5 690.0,405.7 693.1,402.4 696.3,400.0 699.2,398.4 702.2,397.6 705.1,396.1 708.1,395.0 711.0,394.2 714.0,393.7 717.2,391.8 720.4,391.0 723.6,389.2 726.8,389.3 730.0,387.5 732.9,386.7 735.8,385.0 738.6,384.3 741.5,383.5 744.4,382.5 747.3,381.8 750.4,380.7 753.5,381.3 756.5,381.0 759.6,379.6 762.7,379.1 765.8,377.9 768.8,377.4 771.9,377.3 775.0,377.0 777.6,376.3 780.2,376.9 782.9,375.6 785.5,375.8 788.0,378.0 791.5,373.2 795.0,370.0 797.9,369.7 800.8,368.0 803.6,366.4 806.5,366.1 809.4,365.0 812.4,363.5 815.4,363.5 818.4,363.5 821.3,362.6 824.3,361.6 827.3,360.1 830.3,359.5 833.3,359.0 836.3,358.4 839.2,359.3 842.2,358.9 845.1,359.2 848.1,358.4 851.1,358.2 854.0,359.1 857.0,358.5 860.0,359.1 863.0,358.7 866.0,358.4 869.0,358.3 872.0,357.9 875.0,356.9 878.0,357.2 881.0,357.0 884.2,356.6 887.3,355.9 890.5,355.7 893.7,356.0 896.8,355.8 900.0,356.0 903.2,356.1 906.4,356.3 909.6,355.2 912.8,355.7 916.0,354.8"/>
<polyline stroke="#800000" points="72.0,277.8 75.0,277.1 78.0,278.1 81.0,276.6 84.0,277.3 87.0,276.1 90.0,276.5 93.0,275.8 96.0,276.7 99.0,275.1 102.0,275.5 105.0,274.9 108.0,274.6 111.0,274.3 114.0,274.0 117.0,272.5 120.0,272.5 123.0,270.3 126.0,269.6 129.0,268.2 132.0,267.6 135.0,267.0 138.1,265.8 141.1,265.6 144.2,263.8 147.2,262.3 150.3,261.5 153.3,261.7 156.4,259.9 159.3,258.5 162.3,258.6 165.2,257.5 168.2,257.2 171.2,256.0 174.1,255.8 177.1,254.7 180.0,254.0 183.1,253.4 186.2,253.0 189.4,251.7 192.5,250.2 195.6,249.2 198.8,249.8 201.9,248.3 205.0,247.5 208.1,246.2 211.1,246.7 214.2,245.3 217.2,244.8 220.3,244.2 223.4,242.5 226.4,241.8 229.5,241.3 232.4,240.1 235.2,237.1 238.1,236.2 241.0,234.0 244.0,231.9 247.0,231.3 250.0,229.8 253.0,228.7 256.0,227.0 259.0,225.0 262.2,223.8 265.5,222.2 268.7,220.9 271.9,220.4 275.2,219.2 278.4,218.0 281.5,214.9 284.6,213.8 287.8,210.8 290.9,208.7 294.0,206.0 296.7,203.3 299.4,201.0 302.2,198.3 304.9,196.5 307.6,194.5 310.6,190.9 313.6,187.9 316.6,184.6 319.7,182.0 322.7,178.9 325.7,175.0 330.0,169.5 332.8,165.6 335.6,162.0 338.3,158.1 341.1,154.5 343.9,151.5 346.6,148.7 349.4,144.1 352.2,141.3 355.1,138.5 358.1,134.4 361.0,131.5 364.4,128.9 367.8,127.8 372.0,127.0 375.0,129.7 378.0,131.3 381.0,133.8 384.0,135.8 387.0,138.7 390.0,141.3 392.9,146.2 395.9,151.3 398.8,156.3 401.7,161.7 404.7,167.1 407.6,172.6 411.3,181.3 415.0,190.0 417.6,195.0 420.8,201.2 423.9,207.5 427.1,213.8 430.2,220.2 433.4,226.7 436.7,232.1 440.0,237.5 443.4,243.1 446.7,248.4 449.7,253.4 452.7,258.5 455.8,263.7 458.8,268.3 461.8,273.5 464.7,277.4 467.6,281.6 470.6,285.8 473.5,290.0 476.8,294.9 480.1,299.8 483.5,304.5 486.8,309.4 489.8,313.9 492.8,317.8 495.7,322.5 498.7,326.5 501.7,331.0 504.6,329.1 507.6,326.0 511.7,329.0 514.2,325.9 516.7,325.1 519.2,322.0 523.4,332.0 527.6,333.0 530.0,332.8 532.3,331.8 534.2,310.0 534.9,300.0 536.0,283.4 537.5,283.4 538.6,300.0 539.4,312.0 540.8,323.4 543.0,332.0 546.0,322.0 550.0,333.0 553.4,344.2 556.8,355.0 560.1,351.9 563.5,348.5 566.8,331.8 570.0,348.5 573.5,384.4 575.8,412.0 578.0,440.0 582.0,470.0 585.0,490.0 588.4,503.0 591.7,516.7 595.0,530.0 598.0,545.0 601.0,560.0 604.0,577.3 607.0,595.0 610.0,630.0 611.8,651.9 613.8,627.5 615.7,606.0 617.7,590.6 622.0,566.0 624.7,557.4 627.3,548.7 630.0,540.0 632.8,531.7 635.7,523.2 638.5,515.0 641.8,504.0 645.0,493.4 647.6,486.3 650.0,503.4 653.5,490.0 657.0,486.3 660.0,480.0 664.4,463.8 668.5,455.0 671.8,455.1 675.0,455.0 677.5,452.4 680.0,450.0 683.2,445.0 686.3,440.7 689.5,437.4 692.6,433.8 696.3,431.3 700.0,428.0 702.8,426.5 705.6,424.3 708.4,422.3 711.2,420.4 714.0,418.8 717.2,416.8 720.4,415.2 723.6,414.0 726.8,411.9 730.0,411.0 732.9,410.3 735.8,409.2 738.6,407.9 741.5,405.9 744.4,405.4 747.3,404.5 750.4,403.5 753.5,402.0 756.6,402.5 759.8,401.2 762.9,399.9 766.0,399.0 769.2,398.4 772.5,396.8 775.8,395.9 779.0,395.5 782.2,395.0 785.5,393.7 788.5,392.6 791.5,390.2 794.5,389.9 797.5,389.0 800.4,387.4 803.4,386.4 806.4,385.1 809.4,383.0 812.4,382.0 815.4,381.5 818.4,381.3 821.3,381.4 824.3,379.8 827.3,380.1 830.3,379.4 833.3,378.2 836.3,377.6 839.3,377.2 842.3,377.1 845.2,376.3 848.2,374.9 851.2,375.2 854.2,373.5 857.2,373.4 860.2,372.6 863.2,373.0 866.1,372.2 869.1,370.7 872.1,370.1 875.0,370.1 878.0,369.8 881.0,368.7 884.2,368.6 887.3,368.7 890.5,368.0 893.7,367.7 896.8,367.0 900.0,366.5 903.2,366.0 906.4,365.8 909.6,365.6 912.8,365.3 916.0,365.0"/>
<polyline stroke="#008080" points="72.0,281.5 75.0,281.3 78.0,281.0 81.0,280.4 84.0,281.4 87.0,279.9 90.0,280.5 93.0,280.3 96.0,280.8 99.0,279.3 102.0,279.8 105.0,279.7 108.0,278.6 111.0,279.0 114.0,279.0 118.0,279.0 120.8,276.0 123.7,272.3 126.5,269.0 129.9,268.7 133.2,267.2 136.6,266.7 140.0,266.5 143.3,265.3 146.6,265.3 149.8,265.4 153.1,264.2 156.4,263.5 159.3,263.2 162.3,261.8 165.2,261.6 168.2,259.9 171.2,259.4 174.1,259.3 177.1,258.6 180.0,257.5 183.1,256.6 186.2,255.2 189.4,254.7 192.5,253.8 195.6,253.1 198.8,253.1 201.9,251.3 205.0,251.0 208.1,250.9 211.1,250.1 214.2,248.0 217.2,247.8 220.3,247.2 223.4,245.7 226.4,245.6 229.5,245.0 232.4,243.9 235.2,240.9 238.1,239.9 241.0,238.0 244.0,235.9 247.0,235.1 250.0,234.1 253.0,231.5 256.0,229.7 259.0,229.0 262.2,227.2 265.5,226.7 268.7,224.7 271.9,223.7 275.2,223.2 278.4,222.0 281.5,220.3 284.6,217.1 287.8,214.6 290.9,212.6 294.0,210.0 296.7,207.0 299.4,205.5 302.2,202.6 304.9,201.0 307.6,198.5 310.6,196.0 313.6,191.3 316.6,188.8 319.7,185.7 322.7,181.7 325.7,179.0 328.7,175.0 331.7,171.4 334.7,167.5 337.7,163.2 340.7,159.5 343.8,156.7 346.9,153.9 350.0,150.0 353.0,146.5 356.0,144.0 359.0,140.0 362.0,137.4 365.0,134.5 368.5,133.3 372.0,131.5 374.8,132.4 377.5,133.0 380.6,136.8 383.8,139.0 386.9,142.7 390.0,146.3 393.3,151.9 396.7,157.2 400.0,162.6 403.3,170.0 406.7,177.5 410.0,185.0 411.7,190.0 415.0,197.6 418.4,204.3 421.7,210.5 425.0,216.7 428.4,223.4 431.4,228.9 434.4,234.0 437.4,239.3 440.4,244.5 443.4,250.0 446.8,255.0 450.1,259.9 453.4,264.8 456.8,270.0 460.1,275.7 463.5,281.0 466.8,286.8 470.0,290.0 472.9,295.0 475.9,299.5 478.9,304.7 481.8,309.4 484.2,314.0 486.7,318.4 489.7,322.9 492.7,327.5 495.7,331.8 498.7,336.6 501.7,341.0 505.0,337.9 508.4,335.0 510.9,333.8 513.4,333.4 516.7,329.4 520.0,325.0 524.0,335.0 528.0,337.0 532.0,340.0 534.2,334.5 536.5,329.0 538.8,330.3 541.0,332.0 543.5,327.2 546.0,322.0 550.0,332.0 553.4,338.9 556.8,346.0 559.8,340.1 562.7,334.0 565.2,358.5 567.7,368.3 570.2,378.5 572.0,385.0 575.0,420.0 578.0,450.0 581.0,475.0 583.2,491.8 586.6,506.1 590.0,520.0 593.1,531.4 596.3,543.0 600.0,569.0 603.0,576.8 606.0,585.0 610.0,596.4 613.8,579.0 615.7,566.0 618.4,548.5 621.3,541.2 624.2,533.3 627.1,526.2 630.0,518.5 632.8,510.9 635.7,502.9 638.5,495.0 641.3,488.4 644.0,482.1 646.8,476.0 650.1,471.2 653.5,466.7 656.8,463.2 660.2,460.2 663.5,456.7 666.5,455.0 669.6,451.6 672.7,448.9 675.7,447.0 680.0,441.7 683.5,437.8 687.0,433.8 690.2,430.9 693.5,428.4 696.8,426.8 700.0,424.4 702.8,423.2 705.6,420.7 708.4,419.9 711.2,418.8 714.0,417.0 717.2,416.0 720.4,414.0 723.6,413.4 726.8,410.9 730.0,410.0 732.9,409.2 735.8,408.1 738.6,407.1 741.5,405.3 744.4,403.5 747.3,403.0 750.4,400.9 753.5,400.4 756.6,398.5 759.8,397.9 762.9,395.7 766.0,395.0 769.2,394.5 772.5,392.7 775.8,391.5 779.0,390.8 782.2,390.3 785.5,389.5 788.7,387.7 791.9,385.6 795.0,383.3 798.2,381.9 801.4,380.8 804.6,378.2 807.5,377.3 810.4,377.0 813.2,374.6 816.1,375.1 819.0,373.4 821.9,372.3 824.7,370.1 827.6,368.4 830.4,366.7 833.3,365.0 836.9,365.1 840.5,363.9 843.7,365.2 846.8,368.1 850.0,369.9 853.6,370.5 857.2,371.0 860.2,370.2 863.2,370.4 866.1,369.9 869.1,368.4 872.1,368.8 875.0,367.9 878.0,367.5 881.0,367.0 884.2,366.8 887.3,365.5 890.5,365.9 893.7,365.1 896.8,365.5 900.0,364.5 903.2,363.6 906.4,364.0 909.6,363.4 912.8,362.7 916.0,362.0"/>
<polyline stroke="#808000" points="72.0,280.0 75.0,279.9 78.0,279.4 81.0,279.4 84.0,278.5 87.0,279.3 90.0,278.5 92.9,278.8 95.7,278.3 98.6,277.3 101.4,277.7 104.3,277.2 107.1,276.8 110.0,277.0 112.5,277.9 115.0,277.3 117.5,273.0 120.0,268.2 122.9,267.4 125.8,268.6 128.6,268.1 131.5,267.7 134.4,267.4 137.2,268.0 140.1,267.5 143.0,267.5 146.4,261.5 150.0,263.5 153.2,263.2 156.4,262.4 159.3,261.9 162.3,260.3 165.2,260.6 168.2,260.2 171.2,259.5 174.1,258.2 177.1,256.5 180.0,256.5 183.1,254.8 186.2,254.2 189.4,254.6 192.5,252.7 195.6,251.9 198.8,251.9 201.9,250.1 205.0,249.5 208.1,248.8 211.1,247.8 214.2,246.5 217.2,246.5 220.3,246.2 223.4,244.3 226.4,243.6 229.5,243.3 232.4,241.2 235.2,238.6 238.1,237.4 241.0,235.4 244.0,234.4 247.0,232.7 250.0,231.1 253.0,230.1 256.0,227.5 259.0,226.6 262.2,225.6 265.5,224.1 268.7,223.4 271.9,221.4 275.2,221.4 278.4,219.8 281.5,216.8 284.6,214.5 287.8,213.2 290.9,211.1 294.0,208.0 296.7,205.6 299.4,203.2 302.2,200.6 304.9,198.4 307.6,196.4 310.6,193.6 313.6,189.9 316.6,186.8 319.7,184.4 322.7,180.9 325.7,178.5 330.0,174.5 332.8,170.9 335.6,167.4 338.3,163.8 341.1,160.0 343.9,156.9 346.6,153.7 349.4,150.7 352.2,147.8 355.2,143.5 358.1,139.8 361.1,135.6 363.9,132.5 366.7,130.0 369.6,129.1 372.5,128.8 375.2,128.5 378.0,129.5 381.5,131.6 385.0,133.8 387.9,137.3 390.9,140.3 393.8,143.8 397.6,150.2 401.3,156.3 404.2,161.8 407.1,167.0 410.0,172.6 413.4,181.3 416.7,190.0 420.0,195.0 423.0,200.9 426.0,206.4 429.0,212.1 432.0,217.5 435.0,223.4 438.0,228.4 441.0,233.4 444.0,238.4 447.0,243.4 450.0,248.4 453.4,253.8 456.7,259.2 460.0,264.6 463.4,270.0 466.7,276.5 470.0,283.4 472.5,286.7 475.0,290.0 478.2,295.2 481.5,300.0 484.8,304.8 488.0,310.0 490.7,313.6 493.5,317.7 496.2,321.4 499.0,325.2 501.7,329.3 504.6,326.2 507.6,324.3 511.7,327.6 514.2,325.3 516.7,324.0 519.2,321.0 523.4,331.8 527.6,332.6 531.0,343.5 534.3,384.4 536.0,430.0 537.0,485.0 538.0,430.0 539.3,384.4 541.0,331.8 543.5,326.8 546.0,321.8 550.0,331.8 553.4,337.6 556.8,343.5 559.8,337.6 562.7,331.8 565.2,358.5 567.7,368.5 570.2,378.5 571.8,384.4 575.0,420.0 578.0,450.0 581.0,475.0 583.4,491.8 586.7,505.9 590.0,520.0 593.0,535.1 596.0,550.0 600.0,566.0 603.5,580.4 607.0,594.5 610.9,627.5 612.8,649.5 613.8,645.0 615.7,625.6 617.7,606.0 620.6,586.7 623.5,566.0 626.8,550.0 630.1,540.1 633.5,530.0 636.0,521.7 638.5,513.5 641.0,501.8 643.5,490.0 646.8,473.4 650.0,447.0 651.8,481.7 654.3,518.5 656.8,506.8 660.0,490.0 663.4,481.9 666.8,473.4 670.3,468.4 673.8,463.8 676.9,457.6 680.0,451.7 682.9,449.0 685.9,446.2 688.8,443.0 690.0,438.0 693.3,435.6 696.7,432.8 700.0,430.0 702.8,428.0 705.6,425.0 708.4,423.1 711.2,420.8 714.0,417.6 717.2,415.7 720.4,414.5 723.6,412.5 726.8,410.9 730.0,408.5 732.9,406.5 735.8,406.7 738.6,405.2 741.5,404.2 744.4,403.0 747.3,401.0 750.4,399.8 753.5,399.6 756.6,397.9 759.8,397.8 762.9,397.5 766.0,396.0 769.2,394.7 772.5,394.2 775.8,393.0 779.0,392.4 782.2,391.6 785.5,391.3 788.5,389.5 791.5,389.7 794.5,388.4 797.5,386.5 800.4,385.8 803.4,384.5 806.4,383.0 809.4,381.8 812.4,381.1 815.4,380.9 818.4,380.1 821.3,379.0 824.3,378.6 827.3,378.4 830.3,377.8 833.3,377.0 836.3,376.1 839.3,376.3 842.3,376.2 845.2,375.8 848.2,375.0 851.2,373.6 854.2,373.7 857.2,373.4 860.2,372.4 863.2,372.1 866.1,372.1 869.1,372.1 872.1,372.3 875.0,371.8 878.0,371.0 881.0,371.0 884.0,369.8 887.0,368.0 890.0,366.5 893.0,365.0 896.5,364.4 900.0,364.5 903.2,364.2 906.4,363.8 909.6,364.2 912.8,363.6 916.0,363.4"/>
</g>
<g stroke="#000" stroke-width="1" shape-rendering="crispEdges" fill="none">
<line x1="72.5" y1="111" x2="72.5" y2="680"/>
<line x1="72" y1="111.5" x2="917" y2="111.5"/>
<line x1="72" y1="679.5" x2="917" y2="679.5"/>
<line x1="916.5" y1="111" x2="916.5" y2="680"/>
<line x1="69" y1="112.5" x2="72" y2="112.5"/>
<line x1="69" y1="127.5" x2="72" y2="127.5"/>
<line x1="69" y1="143.5" x2="72" y2="143.5"/>
<line x1="69" y1="159.5" x2="72" y2="159.5"/>
<line x1="69" y1="175.5" x2="72" y2="175.5"/>
<line x1="69" y1="191.5" x2="72" y2="191.5"/>
<line x1="69" y1="207.5" x2="72" y2="207.5"/>
<line x1="69" y1="223.5" x2="72" y2="223.5"/>
<line x1="69" y1="239.5" x2="72" y2="239.5"/>
<line x1="69" y1="255.5" x2="72" y2="255.5"/>
<line x1="69" y1="271.5" x2="72" y2="271.5"/>
<line x1="69" y1="286.5" x2="72" y2="286.5"/>
<line x1="69" y1="302.5" x2="72" y2="302.5"/>
<line x1="69" y1="318.5" x2="72" y2="318.5"/>
<line x1="69" y1="334.5" x2="72" y2="334.5"/>
<line x1="69" y1="350.5" x2="72" y2="350.5"/>
<line x1="69" y1="366.5" x2="72" y2="366.5"/>
<line x1="69" y1="382.5" x2="72" y2="382.5"/>
<line x1="69" y1="398.5" x2="72" y2="398.5"/>
<line x1="69" y1="414.5" x2="72" y2="414.5"/>
<line x1="69" y1="429.5" x2="72" y2="429.5"/>
<line x1="69" y1="445.5" x2="72" y2="445.5"/>
<line x1="69" y1="461.5" x2="72" y2="461.5"/>
<line x1="69" y1="477.5" x2="72" y2="477.5"/>
<line x1="69" y1="493.5" x2="72" y2="493.5"/>
<line x1="69" y1="509.5" x2="72" y2="509.5"/>
<line x1="69" y1="525.5" x2="72" y2="525.5"/>
<line x1="69" y1="541.5" x2="72" y2="541.5"/>
<line x1="69" y1="557.5" x2="72" y2="557.5"/>
<line x1="69" y1="573.5" x2="72" y2="573.5"/>
<line x1="69" y1="588.5" x2="72" y2="588.5"/>
<line x1="69" y1="604.5" x2="72" y2="604.5"/>
<line x1="69" y1="620.5" x2="72" y2="620.5"/>
<line x1="69" y1="636.5" x2="72" y2="636.5"/>
<line x1="69" y1="652.5" x2="72" y2="652.5"/>
<line x1="69" y1="668.5" x2="72" y2="668.5"/>
<line x1="72.5" y1="680" x2="72.5" y2="683"/>
<line x1="156.5" y1="680" x2="156.5" y2="683"/>
<line x1="241.5" y1="680" x2="241.5" y2="683"/>
<line x1="325.5" y1="680" x2="325.5" y2="683"/>
<line x1="410.5" y1="680" x2="410.5" y2="683"/>
<line x1="494.5" y1="680" x2="494.5" y2="683"/>
<line x1="578.5" y1="680" x2="578.5" y2="683"/>
<line x1="663.5" y1="680" x2="663.5" y2="683"/>
<line x1="747.5" y1="680" x2="747.5" y2="683"/>
<line x1="832.5" y1="680" x2="832.5" y2="683"/>
<line x1="916.5" y1="680" x2="916.5" y2="683"/>
<line x1="913" y1="679.5" x2="916" y2="679.5"/>
<line x1="913" y1="651.5" x2="916" y2="651.5"/>
<line x1="913" y1="622.5" x2="916" y2="622.5"/>
<line x1="913" y1="594.5" x2="916" y2="594.5"/>
<line x1="913" y1="565.5" x2="916" y2="565.5"/>
<line x1="913" y1="537.5" x2="916" y2="537.5"/>
<line x1="913" y1="509.5" x2="916" y2="509.5"/>
<line x1="913" y1="480.5" x2="916" y2="480.5"/>
<line x1="913" y1="452.5" x2="916" y2="452.5"/>
<line x1="913" y1="423.5" x2="916" y2="423.5"/>
<line x1="913" y1="395.5" x2="916" y2="395.5"/>
<line x1="913" y1="367.5" x2="916" y2="367.5"/>
<line x1="913" y1="338.5" x2="916" y2="338.5"/>
<line x1="913" y1="310.5" x2="916" y2="310.5"/>
<line x1="913" y1="281.5" x2="916" y2="281.5"/>
<line x1="913" y1="253.5" x2="916" y2="253.5"/>
<line x1="913" y1="225.5" x2="916" y2="225.5"/>
<line x1="913" y1="196.5" x2="916" y2="196.5"/>
<line x1="913" y1="168.5" x2="916" y2="168.5"/>
<line x1="913" y1="139.5" x2="916" y2="139.5"/>
</g>
<g fill="#000" letter-spacing="-0.2">
<g text-anchor="end">
<text x="66" y="116.5">2</text>
<text x="66" y="131.5">0</text>
<text x="66" y="147.5">-2</text>
<text x="66" y="163.5">-4</text>
<text x="66" y="179.5">-6</text>
<text x="66" y="195.5">-8</text>
<text x="66" y="211.5">-10</text>
<text x="66" y="227.5">-12</text>
<text x="66" y="243.5">-14</text>
<text x="66" y="259.5">-16</text>
<text x="66" y="275.5">-18</text>
<text x="66" y="290.5">-20</text>
<text x="66" y="306.5">-22</text>
<text x="66" y="322.5">-24</text>
<text x="66" y="338.5">-26</text>
<text x="66" y="354.5">-28</text>
<text x="66" y="370.5">-30</text>
<text x="66" y="386.5">-32</text>
<text x="66" y="402.5">-34</text>
<text x="66" y="418.5">-36</text>
<text x="66" y="433.5">-38</text>
<text x="66" y="449.5">-40</text>
<text x="66" y="465.5">-42</text>
<text x="66" y="481.5">-44</text>
<text x="66" y="497.5">-46</text>
<text x="66" y="513.5">-48</text>
<text x="66" y="529.5">-50</text>
<text x="66" y="545.5">-52</text>
<text x="66" y="561.5">-54</text>
<text x="66" y="577.5">-56</text>
<text x="66" y="592.5">-58</text>
<text x="66" y="608.5">-60</text>
<text x="66" y="624.5">-62</text>
<text x="66" y="640.5">-64</text>
<text x="66" y="656.5">-66</text>
<text x="66" y="672.5">-68</text>
</g><g text-anchor="middle">
<text x="72.5" y="698">400000</text>
<text x="156.5" y="698">410000</text>
<text x="241.5" y="698">420000</text>
<text x="325.5" y="698">430000</text>
<text x="410.5" y="698">440000</text>
<text x="494.5" y="698">450000</text>
<text x="578.5" y="698">460000</text>
<text x="663.5" y="698">470000</text>
<text x="747.5" y="698">480000</text>
<text x="832.5" y="698">490000</text>
<text x="916.5" y="698">500000</text>
</g></g>
<rect x="378" y="120" width="89" height="13" fill="#fff"/>
<text x="378.7" y="131" fill="#000" letter-spacing="-0.12">435 782Hz, 0.3dB</text>
<rect x="423" y="130" width="91" height="13" fill="#fff"/>
<text x="423.7" y="141" fill="#000" letter-spacing="-0.12">441 114Hz, -1.0dB</text>
<rect x="540" y="273" width="98" height="13" fill="#fff"/>
<text x="540.7" y="284" fill="#000" letter-spacing="-0.12">454 976Hz, -19.0dB</text>
<rect x="541" y="479" width="98" height="13" fill="#fff"/>
<text x="541.7" y="490" fill="#000" letter-spacing="-0.12">455 095Hz, -44.9dB</text>
<rect x="584" y="553" width="98" height="13" fill="#fff"/>
<text x="584.7" y="564" fill="#000" letter-spacing="-0.12">460 190Hz, -54.2dB</text>
<rect x="621" y="653" width="98" height="13" fill="#fff"/>
<text x="621.7" y="664" fill="#000" letter-spacing="-0.12">464 573Hz, -66.8dB</text>
<rect x="370.5" y="121.5" width="7" height="7" fill="#00ff00" stroke="#000" stroke-width="1" shape-rendering="crispEdges"/>
<rect x="415.5" y="131.5" width="7" height="7" fill="#00ff00" stroke="#000" stroke-width="1" shape-rendering="crispEdges"/>
<rect x="532.5" y="274.5" width="7" height="7" fill="#00ff00" stroke="#000" stroke-width="1" shape-rendering="crispEdges"/>
<rect x="533.5" y="480.5" width="7" height="7" fill="#00ff00" stroke="#000" stroke-width="1" shape-rendering="crispEdges"/>
<rect x="576.5" y="554.5" width="7" height="7" fill="#00ff00" stroke="#000" stroke-width="1" shape-rendering="crispEdges"/>
<rect x="613.5" y="654.5" width="7" height="7" fill="#00ff00" stroke="#000" stroke-width="1" shape-rendering="crispEdges"/>
<rect x="775" y="103" width="172" height="24" fill="#fff"/>
<rect x="916" y="127" width="31" height="265" fill="#fff"/>
</svg>
<div id="rd"><span>396 564Hz, -29.0dB</span></div>
<div class="btn" style="left:918px;top:136px;width:23px;height:23px"><svg width="16" height="16" viewBox="0 0 16 16" style="position:absolute;left:3px;top:3px;overflow:visible"><path d="M9.5 9.5L14 14" stroke="#b86a28" stroke-width="3.2" stroke-linecap="round"/><path d="M9.8 9.2L13.6 13" stroke="#e09a50" stroke-width="1.2" stroke-linecap="round"/><rect x="1" y="0.8" width="10" height="10" rx="3.2" fill="#cfe0f8" stroke="#8fb4ea" stroke-width="1.5"/></svg></div>
<div class="btn" style="left:918px;top:167px;width:23px;height:23px"><svg width="16" height="16" viewBox="0 0 16 16" style="position:absolute;left:3px;top:3px;overflow:visible"><rect x="0" y="0" width="16" height="16" fill="#fdfdfd"/><g fill="#4aa84a" stroke="#2f7f2f" stroke-width="0.5"><path d="M0.8 0.8H5.5L4 2.3L6.5 4.8L4.8 6.5L2.3 4L0.8 5.5Z"/><path d="M15.2 0.8V5.5L13.7 4L11.2 6.5L9.5 4.8L12 2.3L10.5 0.8Z"/><path d="M0.8 15.2V10.5L2.3 12L4.8 9.5L6.5 11.2L4 13.7L5.5 15.2Z"/><path d="M15.2 15.2H10.5L12 13.7L9.5 11.2L11.2 9.5L13.7 12L15.2 10.5Z"/></g></svg></div>
<div class="btn" style="left:918px;top:198px;width:23px;height:23px"><svg width="16" height="16" viewBox="0 0 16 16" style="position:absolute;left:3px;top:3px;overflow:visible"><path d="M8 0.8L11.2 5H9.6V11H11.2L8 15.2L4.8 11H6.4V5H4.8Z" fill="#4fb04f" stroke="#1f6a1f" stroke-width="1.2" stroke-linejoin="round"/></svg></div>
<div class="btn" style="left:918px;top:246px;width:23px;height:23px"><svg width="16" height="16" viewBox="0 0 16 16" style="position:absolute;left:3px;top:3px;overflow:visible"><path d="M0.8 0.5V14.2H11" stroke="#1f6fd8" stroke-width="1.6" fill="none"/><path d="M1 0.8L6 5.5L1.5 9Z" fill="#3a8ae8"/><path d="M1.5 13L5 10L8 11L10.5 9.5L14 13.5V14.5H1.5Z" fill="#2f8a2f"/><path d="M1.8 11C3 5 6 1.8 9.5 2.2C12.5 2.8 14.4 6 14.6 10" fill="none" stroke="#f02828" stroke-width="1.9"/><path d="M4.5 8.2L8 8.6L11.5 4.5L14.5 6.5" fill="none" stroke="#1f6fe0" stroke-width="1.9"/></svg></div>
<div class="btn" style="left:918px;top:292px;width:23px;height:23px"><svg width="16" height="16" viewBox="0 0 16 16" style="position:absolute;left:3px;top:3px;overflow:visible"><rect x="0.5" y="3.5" width="15" height="10" rx="1" fill="#9a9a9a" stroke="#3a3a3a" stroke-width="1"/><rect x="1.5" y="4.5" width="13" height="3" fill="#bdbdbd"/><rect x="11.5" y="2" width="3" height="2" fill="#3a3a3a"/><rect x="6" y="2.3" width="2.6" height="1.4" fill="#f0b030"/><rect x="11.3" y="5" width="2" height="7.5" fill="#6a6a6a"/><circle cx="6.5" cy="8.7" r="3.9" fill="#5a96e8" stroke="#6a6a6a" stroke-width="1"/></svg></div>
</body></html>
